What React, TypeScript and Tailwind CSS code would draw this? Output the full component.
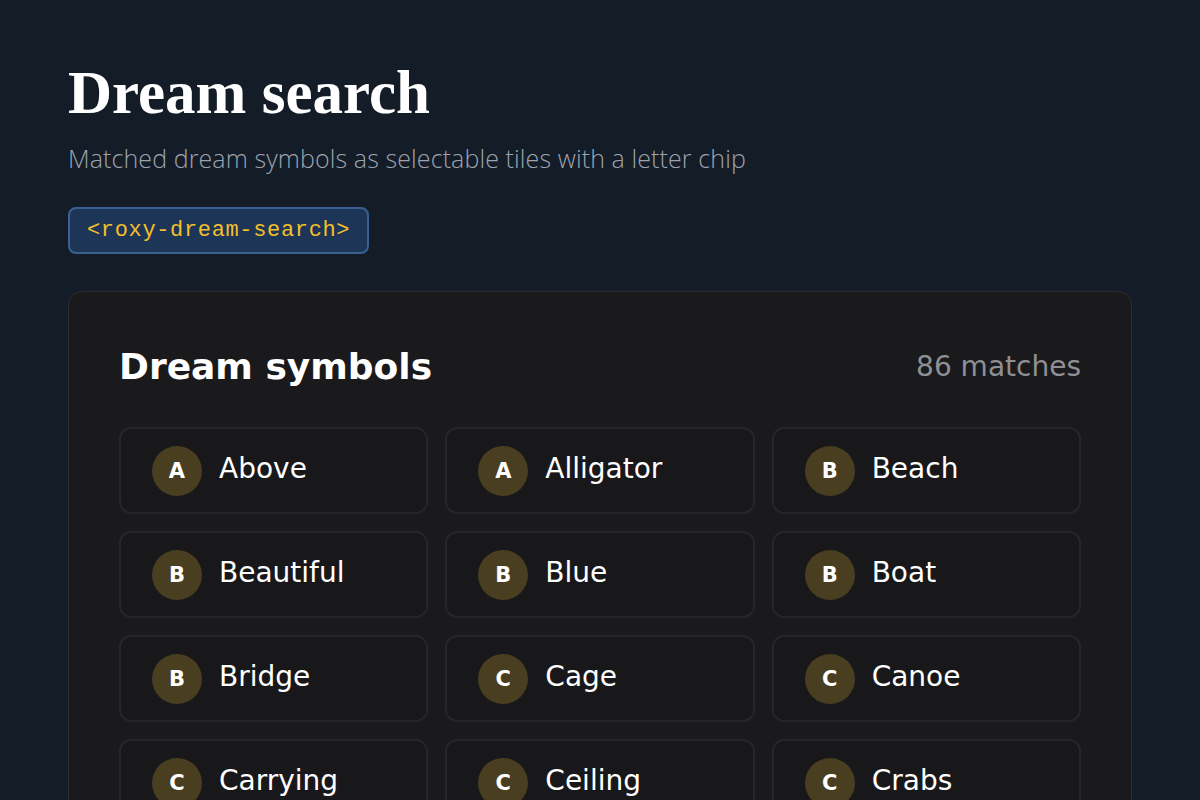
import React from "react";

const items: [string, string][] = [
  ["A", "Above"],
  ["A", "Alligator"],
  ["B", "Beach"],
  ["B", "Beautiful"],
  ["B", "Blue"],
  ["B", "Boat"],
  ["B", "Bridge"],
  ["C", "Cage"],
  ["C", "Canoe"],
  ["C", "Carrying"],
  ["C", "Ceiling"],
  ["C", "Crabs"],
];

export default function App() {
  return (
    <div className="min-h-[800px] w-full bg-[#141c27] overflow-hidden">
      <div className="px-[68px] pt-[57px]">
        <h1
          className="text-[61px] leading-[72px] font-bold text-white"
          style={{ fontFamily: '"Liberation Serif", "Times New Roman", serif' }}
        >
          Dream search
        </h1>
        <p
          className="mt-[13px] text-[25px] leading-[32px] text-[#9ca3af] tracking-[0.1px]"
          style={{ fontFamily: '"Open Sans", "Lato", sans-serif', fontWeight: 300 }}
        >
          Matched dream symbols as selectable tiles with a letter chip
        </p>
        <div className="mt-[33px] inline-flex h-[47px] items-center rounded-[8px] border-2 border-[#3a5f90] bg-[#1d3557] pl-[17px] pr-[17px]">
          <span
            className="text-[22px] text-[#f4bf2a] tracking-[0.65px]"
            style={{ fontFamily: '"Liberation Mono", "DejaVu Sans Mono", monospace' }}
          >
            {"<roxy-dream-search>"}
          </span>
        </div>
        <div
          className="mt-[37px] rounded-[14px] border border-[#2c2c31] bg-[#1a1a1c] px-[50px] pt-[53px] pb-[40px]"
          style={{ fontFamily: '"DejaVu Sans", "Verdana", sans-serif' }}
        >
          <div className="flex items-center justify-between">
            <h2 className="text-[36px] leading-[44px] font-bold text-white">Dream symbols</h2>
            <span className="text-[28px] text-[#8f8f94]">86 matches</span>
          </div>
          <div className="mt-[38px] grid grid-cols-3 gap-x-[17px] gap-y-[17px]">
            {items.map(([l, name]) => (
              <div
                key={name}
                className="flex h-[87px] items-center gap-[17px] rounded-[12px] border-2 border-[#26262a] bg-[#18181a] pl-[31px]"
              >
                <div className="flex h-[50px] w-[50px] shrink-0 items-center justify-center rounded-full bg-[#4a3e21] pt-[3px]">
                  <span className="text-[21px] font-bold text-white">{l}</span>
                </div>
                <span className="text-[28px] text-white pb-[4px]">{name}</span>
              </div>
            ))}
          </div>
        </div>
      </div>
    </div>
  );
}
